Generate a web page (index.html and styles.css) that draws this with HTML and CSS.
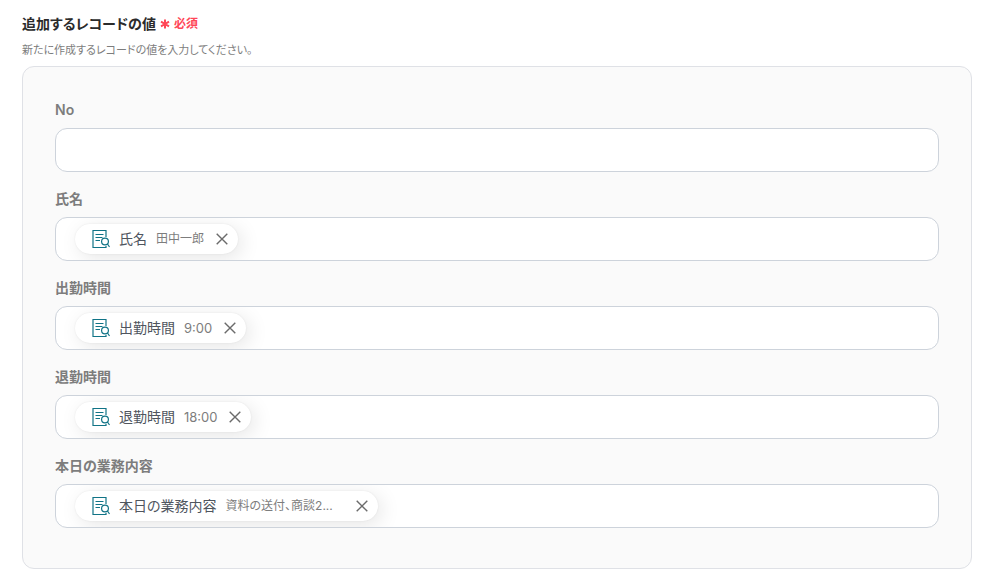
FILE: index.html
```html
<!DOCTYPE html>
<html lang="ja">
<head>
<meta charset="utf-8">
<meta name="viewport" content="width=device-width, initial-scale=1">
<title>追加するレコードの値</title>
<link rel="stylesheet" href="styles.css">
</head>
<body>
<svg class="symbols" aria-hidden="true">
  <symbol id="record" viewBox="0 0 18 20">
    <path d="M14 8V1.5H1V18.5H14V17" />
    <path d="M3.5 5.5H11.5M3.5 8.5H10.5M3.5 11.5H8" />
    <circle cx="13" cy="12.5" r="3.4" />
    <path d="M15.5 15L17.5 18" />
  </symbol>
  <symbol id="close" viewBox="0 0 12 12">
    <path d="M.7.7L11.3 11.3M11.3.7L.7 11.3" />
  </symbol>
</svg>
<form class="record-form">
  <header class="heading">
    <h1 class="title">追加するレコードの値</h1>
    <svg class="asterisk" viewBox="0 0 10 10" aria-hidden="true"><path d="M5 .5V9.5M1 2.7L9 7.3M9 2.7L1 7.3" /></svg>
    <span class="required">必須</span>
  </header>
  <p class="help">新たに作成するレコードの値を入力してください。</p>
  <div class="panel">
    <div class="field">
      <label class="label" for="no">No</label>
      <div class="control"><input class="entry" id="no" type="text"></div>
    </div>
    <div class="field">
      <label class="label" for="name">氏名</label>
      <div class="control">
        <span class="chip"><svg class="record-icon" aria-hidden="true"><use href="#record" /></svg><span class="chip-name">氏名</span><span class="chip-value">田中一郎</span><button class="remove" type="button" aria-label="氏名を削除"><svg class="close-icon"><use href="#close" /></svg></button></span>
        <input class="entry" id="name" type="text">
      </div>
    </div>
    <div class="field">
      <label class="label" for="start">出勤時間</label>
      <div class="control">
        <span class="chip"><svg class="record-icon" aria-hidden="true"><use href="#record" /></svg><span class="chip-name">出勤時間</span><span class="chip-value chip-value-time">9:00</span><button class="remove" type="button" aria-label="出勤時間を削除"><svg class="close-icon"><use href="#close" /></svg></button></span>
        <input class="entry" id="start" type="text">
      </div>
    </div>
    <div class="field">
      <label class="label" for="end">退勤時間</label>
      <div class="control">
        <span class="chip"><svg class="record-icon" aria-hidden="true"><use href="#record" /></svg><span class="chip-name">退勤時間</span><span class="chip-value chip-value-time">18:00</span><button class="remove" type="button" aria-label="退勤時間を削除"><svg class="close-icon"><use href="#close" /></svg></button></span>
        <input class="entry" id="end" type="text">
      </div>
    </div>
    <div class="field">
      <label class="label" for="work">本日の業務内容</label>
      <div class="control">
        <span class="chip"><svg class="record-icon" aria-hidden="true"><use href="#record" /></svg><span class="chip-name">本日の業務内容</span><span class="chip-value chip-value-long">資料の送付、商談2...</span><button class="remove" type="button" aria-label="本日の業務内容を削除"><svg class="close-icon"><use href="#close" /></svg></button></span>
        <input class="entry" id="work" type="text">
      </div>
    </div>
  </div>
</form>
</body>
</html>
```
FILE: styles.css
```css
* {
  box-sizing: border-box;
}

body {
  margin: 0;
  background: #fff;
  color: #7d7d7d;
  font-family: Inter, "Noto Sans CJK JP", sans-serif;
  font-feature-settings: "palt";
}

.symbols {
  display: none;
}

.record-form {
  padding: 14px 33px 14px 22px;
}

.heading {
  display: flex;
  align-items: center;
  gap: 4px;
}

.title {
  margin: 0;
  color: #2b2b2b;
  font-size: 14px;
  font-weight: 600;
  line-height: 20px;
}

.asterisk {
  width: 10px;
  height: 10px;
  fill: none;
  stroke: #ff4757;
  stroke-width: 2;
}

.required {
  color: #ff4757;
  font-size: 12px;
  font-weight: 600;
  line-height: 20px;
}

.help {
  margin: 8px 0;
  font-size: 11px;
  line-height: 16px;
}

.panel {
  display: flex;
  flex-direction: column;
  gap: 17px;
  padding: 33px 32px 40px;
  border: 1px solid #dfe1e6;
  border-radius: 12px;
  background: #fafafa;
}

.field {
  display: flex;
  flex-direction: column;
  gap: 8px;
}

.label {
  align-self: flex-start;
  font-size: 14px;
  font-weight: 600;
  line-height: 20px;
}

.control {
  display: flex;
  align-items: center;
  height: 44px;
  padding: 0 19px;
  overflow: hidden;
  border: 1px solid #cdd3db;
  border-radius: 12px;
  background: #fff;
}

.entry {
  flex: 1;
  min-width: 0;
  height: 100%;
  padding: 0;
  border: 0;
  outline: 0;
  background: none;
  color: #4b5563;
  font: inherit;
  font-size: 14px;
}

.chip {
  display: flex;
  align-items: center;
  height: 30px;
  padding: 0 10px 0 17px;
  border-radius: 15px;
  background: #fff;
  box-shadow: 0 0 2px rgba(0, 0, 0, .08), 4px 4px 20px rgba(0, 0, 0, .1);
}

.record-icon {
  width: 18px;
  height: 20px;
  margin-right: 9px;
  fill: none;
  stroke: #107386;
  stroke-width: 1.2;
}

.chip-name {
  margin-right: 9px;
  color: #4f555e;
  font-size: 14px;
  font-weight: 400;
  line-height: 20px;
}

.chip-value {
  margin-right: 12px;
  font-size: 12px;
  line-height: 20px;
}

.chip-value-time {
  font-size: 13px;
}

.chip-value-long {
  width: 118px;
}

.remove {
  display: flex;
  padding: 0;
  border: 0;
  background: none;
}

.close-icon {
  width: 12px;
  height: 12px;
  fill: none;
  stroke: #6b6b6b;
  stroke-width: 1.4;
}
```
